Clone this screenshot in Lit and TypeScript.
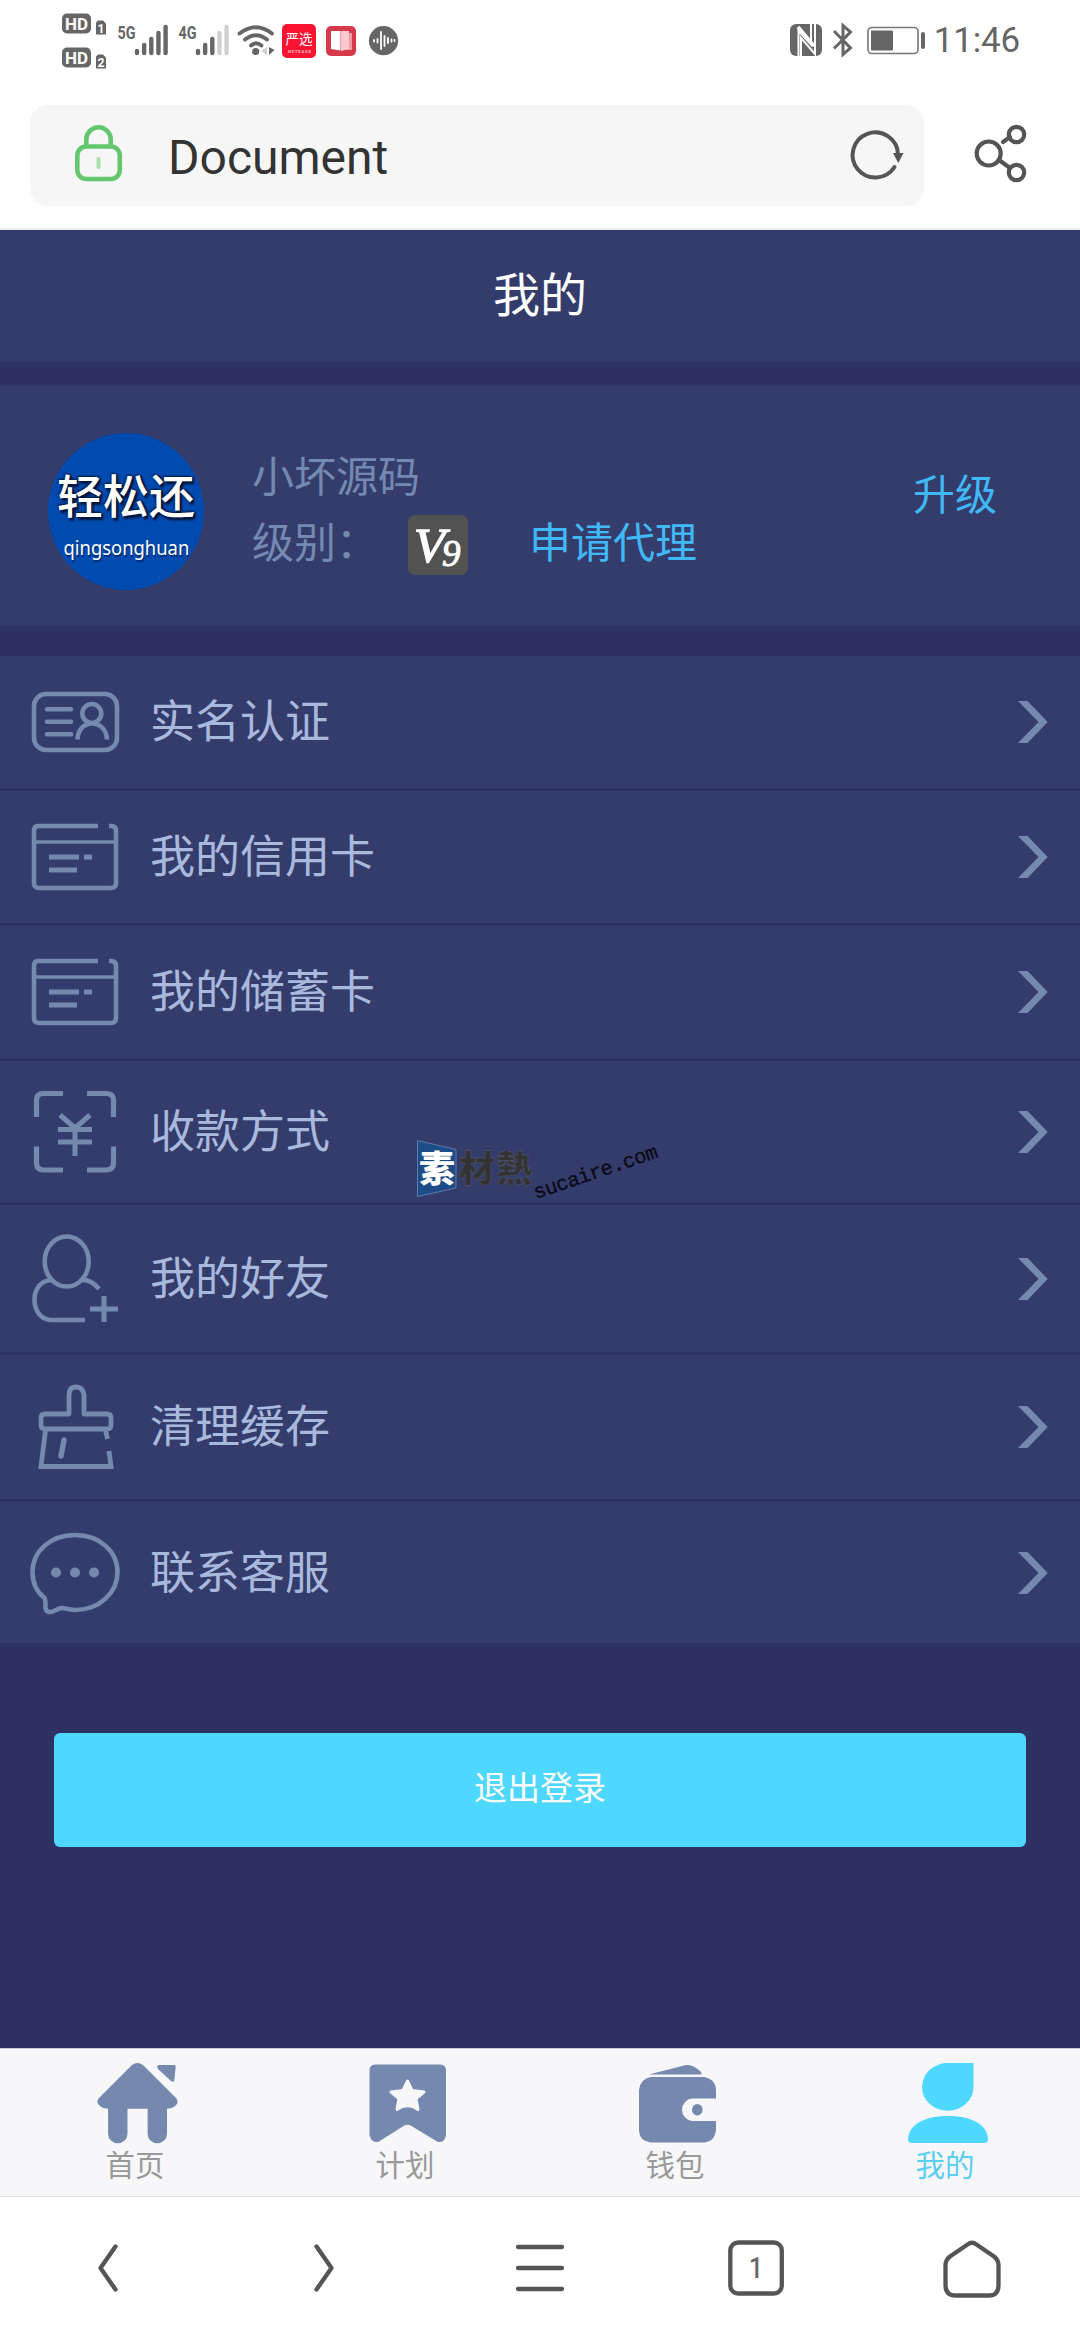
import { LitElement, html, svg, css, TemplateResult } from "lit";
import { customElement, property } from "lit/decorators.js";

const cardIcon = svg`<svg width="90" height="70" viewBox="30 822 90 70" fill="none" stroke="#7489ad" stroke-width="4.600">
  <path d="M98 826H38Q34 826 34 831V883Q34 888 39 888H111Q116 888 116 883V831Q116 826 111 826H109"/>
  <path d="M34 842H116" stroke-width="3.600"/><path d="M49 857H79M84 857H92M49 870H77" stroke-width="5"/></svg>`;

const idIcon = svg`<svg width="90" height="64" viewBox="30 690 90 64" fill="none" stroke="#7489ad" stroke-width="4.600">
  <rect x="34" y="694" width="83" height="56" rx="12"/>
  <path d="M47 709.300H71M47 721.800H71M47 734.300H71" stroke-linecap="round"/>
  <circle cx="91.800" cy="713.500" r="9.500"/>
  <path d="M77.500 739.500C78 729.500 84 723.500 92 723.500S106.500 729.500 107 739.500"/></svg>`;

const scanIcon = svg`<svg width="90" height="85" viewBox="30 1089 90 85" fill="none" stroke="#7489ad" stroke-width="5.200">
  <path d="M36.500 1117V1100Q36.500 1093.500 43.500 1093.500H63M87 1093.500H106Q113.500 1093.500 113.500 1100V1117M113.500 1146.500V1163Q113.500 1170 106 1170H87M63 1170H43.500Q36.500 1170 36.500 1163V1146.500"/>
  <path d="M60 1115L75 1128L90 1115M75 1128V1156M58 1129.500H92M58 1142H92" stroke-width="5"/></svg>`;

const friendIcon = svg`<svg width="90" height="91" viewBox="30 1233 90 91" fill="none" stroke="#7489ad" stroke-width="4.600">
  <ellipse cx="66.700" cy="1261.500" rx="22" ry="25"/>
  <path d="M52 1280C41 1280 34.500 1289 34.500 1299.500C34.500 1312 42 1320 52 1320H85M81 1280C89 1279 94 1283 99 1289"/><path d="M90 1309H118M104 1296V1322" stroke-width="5"/></svg>`;

const brushIcon = svg`<svg width="90" height="86" viewBox="30 1384 90 86" fill="none" stroke="#7489ad" stroke-width="4.800">
  <path d="M69 1414V1395Q69 1387 76 1387T84 1395V1414H107Q111 1414 111 1418V1425Q111 1429 107 1429H45Q41 1429 41 1425V1418Q41 1414 45 1414Z" stroke-linejoin="round"/>
  <path d="M45.500 1430L41 1466.500H111L109 1451M105.500 1430L107.500 1439"/><path d="M64 1440L61 1456" stroke-linecap="round" stroke-width="5.400"/></svg>`;

const chatIcon = svg`<svg width="90" height="84" viewBox="30 1530 90 84" fill="none" stroke="#7489ad" stroke-width="4.600">
  <path d="M44.500 1597C37 1591 32.500 1582 32.500 1571C32.500 1550 51 1534 75 1534S117.500 1550 117.500 1571S99 1609 75 1609C70 1609 66 1607 61 1607C56 1608 54 1611 50 1611C46 1611 45 1608 45.500 1603Q45.500 1599 44.500 1597Z"/>
  <g fill="#7489ad" stroke="none"><circle cx="56" cy="1571.500" r="5"/><circle cx="75" cy="1571.500" r="5"/><circle cx="94" cy="1571.500" r="5"/></g></svg>`;

const rows = [
  { label: "实名认证", icon: idIcon, size: "short" },
  { label: "我的信用卡", icon: cardIcon, size: "short" },
  { label: "我的储蓄卡", icon: cardIcon, size: "short" },
  { label: "收款方式", icon: scanIcon, size: "medium" },
  { label: "我的好友", icon: friendIcon, size: "tall" },
  { label: "清理缓存", icon: brushIcon, size: "roomy" },
  { label: "联系客服", icon: chatIcon, size: "medium" },
];

const tabs = [
  {
    label: "首页",
    icon: svg`<svg width="82" height="82" viewBox="95 2062 82 82" fill="currentColor"><path d="M131 2065Q136.500 2061 142 2065L175 2098Q178.500 2101.500 174.500 2105.500Q171 2108.700 166 2108.700V2134A9.700 9.200 0 0 1 146.600 2134V2108.700H126.500V2134A9.700 9.200 0 0 1 107.100 2134V2108.700Q102 2108.700 98.500 2105.500Q94.500 2101.500 98 2098Z"/><path d="M158 2065H173Q175 2065 174.700 2067L173.400 2080Q173 2083 170 2081L157 2069Q155 2065.500 158 2065Z"/></svg>`,
  },
  {
    label: "计划",
    icon: svg`<svg width="82" height="82" viewBox="365 2062 82 82" fill="currentColor"><path d="M374 2064.500H439Q445 2064.500 445 2070.500V2135Q443.500 2144 436 2141.500L410.500 2126Q406.500 2123.500 402.500 2126L378 2141.500Q370.500 2144 368.500 2135V2070.500Q368.500 2064.500 374 2064.500Z"/><path d="M406.500 2081L411 2090.500L423 2092L415 2098.500L417 2109.500Q406.500 2102 396 2109.500L398 2098.500L390 2092L402 2090.500Z" fill="#f7f7fa" stroke="#f7f7fa" stroke-width="3" stroke-linejoin="round"/></svg>`,
  },
  {
    label: "钱包",
    icon: svg`<svg width="82" height="82" viewBox="635 2062 82 82" fill="currentColor"><path d="M648 2074.500L685 2065Q692 2064 700 2072L700.500 2074.500Z"/><path d="M650 2077H703Q715 2079 715 2091V2098.500H691A11 11.300 0 0 0 691 2121H715V2130Q714 2141 704 2142.500H650Q639 2141.500 638 2131V2090Q639 2079 650 2077Z"/><ellipse cx="696.300" cy="2109.700" rx="5.300" ry="5.800"/></svg>`,
  },
  {
    label: "我的",
    icon: svg`<svg width="82" height="82" viewBox="905 2062 82 82" fill="currentColor"><path d="M943 2063H972.500V2087A25.700 23.800 0 0 1 921 2087Q922 2068 943 2063Z"/><path d="M907 2139C908 2123 926 2116 947 2116S986 2123 987 2139Q987 2143 983 2143H911Q907 2143 907 2139Z"/></svg>`,
  },
];

@customElement("status-bar")
class StatusBar extends LitElement {
  static styles = css`
    :host { display: flex; height: 80px; justify-content: space-between; }
    svg { display: block; }
    .clock { font: 35px/40px Roboto, sans-serif; color: #666; letter-spacing: -0.2px; padding-right: 60px; }
    .right { display: flex; padding-top: 21px; gap: 9px; }
    .condensed { font-family: Roboto, sans-serif; font-weight: 700; }
    .seal { font-family: "Noto Sans CJK SC", sans-serif; }
  `;
  hd(y: number, n: string) {
    return svg`<rect x="62" y=${y} width="29" height="20" rx="5" fill="#666"/>
      <text class="condensed" x="65" y=${y + 16} font-size="17" textLength="23" lengthAdjust="spacingAndGlyphs" fill="#fff">HD</text>
      <path d="M98 ${y + 7}h5l3 3v11h-10v-12z" fill="#666"/>
      <text class="condensed" x="97.500" y=${y + 19} font-size="13" textLength="7" lengthAdjust="spacingAndGlyphs" fill="#fff">${n}</text>`;
  }
  bars(x: number, full: number) {
    return [0, 1, 2, 3, 4].map(
      (i) => svg`<path d="M${x + i * 7.15} 53V${51 - i * 6}" stroke=${i < full ? "#666" : "#d0d0d0"} stroke-width="4.400" stroke-linecap="round"/>`
    );
  }
  render() {
    return html`
      <svg width="420" height="80" viewBox="0 0 420 80">
        ${this.hd(13.500, "1")}${this.hd(47.500, "2")}
        <g class="condensed" fill="#666" font-size="18.500"><text x="117.500" y="38.500" textLength="18" lengthAdjust="spacingAndGlyphs">5G</text><text x="178.500" y="38.500" textLength="18" lengthAdjust="spacingAndGlyphs">4G</text></g>
        ${this.bars(137, 5)}${this.bars(198, 3)}
        <g fill="none" stroke="#666" stroke-width="3.800" stroke-linecap="round"><path d="M239.500 33.500Q256 21 272 33.500M245 39.500Q256 31 267 39.500M251 45.500Q256 41 261.500 45.500"/></g>
        <circle cx="255.700" cy="51.500" r="3.600" fill="#666"/>
        <path d="M267 47V55L261 51Z" fill="#d0d0d0"/><path d="M269 47V55L274.500 50Z" fill="#666"/>
        <rect x="282" y="24" width="34" height="34" rx="5" fill="#fa1432"/>
        <text class="seal" x="285.500" y="44" font-size="13.500" fill="#fff">严选</text>
        <text class="condensed" x="288" y="52.500" font-size="4.200" letter-spacing=".8" fill="#fff" opacity=".7">NETEASE</text>
        <rect x="326" y="26" width="30" height="30" rx="5" fill="#d63a4a"/>
        <path d="M344 33h8v17h-8z" fill="#f09aa6"/><path d="M341 31h8v18l-8 2z" fill="#fac9d0"/><path d="M331 31h9.500v19.500L331 49z" fill="#fff"/>
        <circle cx="383.500" cy="40.700" r="14.600" fill="#666"/>
        <path d="M374 40v1.500M377.500 39v3.500M381 32v17M384.500 36v10M388 38v5M391.500 39.500v2M394.500 40v1" stroke="#fff" stroke-width="1.800" stroke-linecap="round"/>
      </svg>
      <div class="right">
        <svg width="137" height="40" viewBox="788 21 137 40">
          <rect x="790" y="24" width="32" height="32" rx="6" fill="#666"/>
          <path d="M798.500 57V31L811 44.500V24" fill="none" stroke="#fff" stroke-width="2"/>
          <path d="M801 57V38L815 54V24" fill="none" stroke="#fff" stroke-width="2"/>
          <path d="M798 27L814 46" stroke="#fff" stroke-width="3.500"/>
          <path d="M834 31L850.500 48L843 54.500V25.500L850.500 32L834 48.500" fill="none" stroke="#666" stroke-width="3"/>
          <rect x="868" y="27.500" width="50" height="26" rx="4" fill="none" stroke="#777" stroke-width="1.600"/>
          <rect x="871" y="30.500" width="22" height="20" rx="1" fill="#666"/>
          <rect x="921" y="32" width="4" height="17" rx="2" fill="#666"/>
        </svg>
        <span class="clock">11:46</span>
      </div>`;
  }
}

@customElement("address-bar")
class AddressBar extends LitElement {
  static styles = css`
    :host { display: flex; box-sizing: border-box; height: 150px; padding: 25px 0 22px 30px; border-bottom: 2px solid #eee; gap: 46px; }
    svg { display: block; }
    .field { box-sizing: border-box; display: flex; width: 894px; height: 101px; border-radius: 18px; background: #f6f6f6; padding: 18px 20px 0 43px; }
    .title { flex: 1; font: 48px/70px Roboto, sans-serif; color: #333; padding-left: 45px; }
    .share { padding-top: 18px; }
  `;
  render() {
    return html`
      <div class="field">
        <svg width="50" height="60" viewBox="73 123 50 60" fill="none" stroke="#64c76d" stroke-width="4.600">
          <path d="M86.300 147V139.500A12.200 12.200 0 0 1 110.700 139.500V147"/>
          <rect x="77.300" y="146.500" width="42.500" height="32.500" rx="9"/><path d="M98.500 159V167" stroke="#a5dfaa" stroke-width="4" stroke-linecap="round"/>
        </svg>
        <span class="title">Document</span>
        <svg width="56" height="60" viewBox="848 123 56 60">
          <path d="M898 154A22.700 22.500 0 1 0 894.500 167" fill="none" stroke="#555" stroke-width="4" stroke-linecap="round"/><path d="M893 153H903.500L898.300 163Z" fill="#555"/>
        </svg>
      </div>
      <svg class="share" width="60" height="64" viewBox="970 123 60 64" fill="none" stroke="#555" stroke-width="4.200">
        <circle cx="988.700" cy="153.500" r="12"/><circle cx="1016.500" cy="134.500" r="7.700"/><circle cx="1016.500" cy="172.500" r="7.700"/>
        <path d="M1003 142L1010 137M999 160L1010 168" stroke-linecap="round"/>
      </svg>`;
  }
}

@customElement("profile-card")
class ProfileCard extends LitElement {
  static styles = css`
    :host { display: flex; box-sizing: border-box; height: 240px; margin-top: 24px; padding: 47px 83px 0 48px; background: #343c6c; color: #7489b0; font-size: 42px; line-height: 60px; }
    .avatar { display: flex; flex-direction: column; align-items: center; width: 156px; height: 157px; border-radius: 50%; background: #004bb0; color: #fff; }
    .brand { margin-top: 30px; font-size: 46px; line-height: 60px; font-weight: 500; white-space: nowrap; text-shadow: 2px 3px 2px #00163f, -1px -1px 2px #00163f, 2px 0 2px #00163f; }
    .latin { margin-top: 12px; font: 20px/26px "Noto Sans", sans-serif; transform: scaleX(0.92); text-shadow: 1px 2px 1px #002a6e; }
    .info { flex: 1; padding-left: 48px; padding-top: 11px; }
    .level { display: flex; align-items: center; margin-top: 6px; height: 60px; }
    .caption { width: 156px; }
    .badge { width: 60px; height: 60px; margin-top: 10px; border-radius: 7px; background: #525252; }
    .glyph { font-family: "Liberation Serif", serif; font-style: italic; fill: #fff; stroke: #fff; }
    .apply { margin-left: 61px; color: #41b8f6; }
    .upgrade { color: #41b8f6; padding-top: 29px; }
  `;
  render() {
    return html`
      <div class="avatar"><span class="brand">轻松还</span><span class="latin">qingsonghuan</span></div>
      <div class="info">
        <div>小坏源码</div>
        <div class="level">
          <span class="caption">级别：</span>
          <svg class="badge" viewBox="0 0 60 60"><text class="glyph" x="6" y="47" font-size="49" stroke-width="1.400" textLength="31" lengthAdjust="spacingAndGlyphs">V</text><text class="glyph" x="34" y="51" font-size="37" stroke-width="1">9</text></svg>
          <span class="apply">申请代理</span>
        </div>
      </div>
      <span class="upgrade">升级</span>`;
  }
}

@customElement("menu-row")
class MenuRow extends LitElement {
  @property() label = "";
  @property({ attribute: false }) icon?: TemplateResult | unknown;
  static styles = css`
    :host { display: flex; align-items: center; box-sizing: border-box; padding: 0 32px 0 30px; background: #343c6c; border-bottom: 3px solid #2d3262; color: #a9b9dd; }
    svg { display: block; }
    .label { flex: 1; padding-left: 30px; font-size: 45px; line-height: 60px; margin-top: -6px; }
  `;
  render() {
    return html`${this.icon}<span class="label">${this.label}</span>
      <svg width="30" height="42" viewBox="1018 701 30 42"><path d="M1018 701H1027.500L1047.700 722L1027.500 743H1018L1038.500 722Z" fill="#7489ad"/></svg>`;
  }
}

@customElement("tab-bar")
class TabBar extends LitElement {
  static styles = css`
    :host { display: grid; grid-template-columns: repeat(4, 1fr); box-sizing: border-box; height: 149px; background: #f7f7fa; border-top: 1px solid #c9cad8; border-bottom: 1px solid #ddd; }
    .tab { display: flex; flex-direction: column; align-items: center; padding-top: 13px; color: #7489ad; }
    .tab:last-child { color: #4fd8ff; }
    svg { display: block; margin-left: 3px; }
    .name { font-size: 29.500px; line-height: 40px; margin-top: -1px; color: #999; }
    .tab:last-child .name { color: #5acdf2; }
  `;
  render() {
    return html`${tabs.map((t) => html`<div class="tab">${t.icon}<span class="name">${t.label}</span></div>`)}`;
  }
}

@customElement("browser-nav")
class BrowserNav extends LitElement {
  static styles = css`
    :host { display: grid; grid-template-columns: repeat(5, 1fr); box-sizing: border-box; height: 143px; padding-bottom: 2px; background: #fff; place-items: center; }
    svg { display: block; fill: none; stroke: #555; stroke-width: 4.300; stroke-linecap: round; stroke-linejoin: round; }
    .count { font: 500 30px Roboto, sans-serif; fill: #666; stroke: none; }
  `;
  render() {
    return html`
      <svg width="64" height="64"><path d="M39.500 10.500L24.500 32L39.500 53.500"/></svg>
      <svg width="64" height="64"><path d="M24.500 10.500L39.500 32L24.500 53.500"/></svg>
      <svg width="64" height="64"><path d="M10 11H54M10 32H54M10 53H54"/></svg>
      <svg width="64" height="64"><rect x="6.300" y="6.500" width="51.500" height="51" rx="8"/><text class="count" x="25" y="42" textLength="14" lengthAdjust="spacingAndGlyphs">1</text></svg>
      <svg width="64" height="64"><path d="M27.500 8.500Q32 5 36.500 8.500L54 20.500Q58.500 24 58.500 29V49Q58.500 59.500 49 59.500H15.500Q5.500 59.500 5.500 49V29Q5.500 24 10 20.500Z"/></svg>`;
  }
}

@customElement("app-root")
class AppRoot extends LitElement {
  static styles = css`
    :host { display: flex; flex-direction: column; position: relative; width: 1080px; height: 2340px; overflow: hidden; background: #fff; font-family: "Noto Sans CJK SC", sans-serif; }
    .page { flex: 1; background: #2d3262; }
    .heading { height: 132px; background: #343c6c; color: #fff; font-size: 47px; line-height: 123px; text-align: center; }
    .menu { margin-top: 30px; }
    .short { height: 135px; }
    .medium { height: 144px; }
    .tall { height: 150px; }
    .roomy { height: 147px; }
    .logout { margin: 87px 54px 0; height: 114px; border-radius: 6px; background: #4fd8ff; color: #fff; font-size: 33px; line-height: 106px; text-align: center; }
    .watermark { position: absolute; left: 410px; top: 1130px; }
    .mark { font-family: "Noto Sans CJK SC", sans-serif; font-weight: 900; }
    .site { font-family: "Liberation Mono", monospace; }
  `;
  render() {
    return html`
      <status-bar></status-bar>
      <address-bar></address-bar>
      <div class="page">
        <div class="heading">我的</div>
        <profile-card></profile-card>
        <div class="menu">
          ${rows.map((r) => html`<menu-row class=${r.size} .label=${r.label} .icon=${r.icon}></menu-row>`)}
        </div>
        <div class="logout">退出登录</div>
      </div>
      <tab-bar></tab-bar>
      <browser-nav></browser-nav>
      <svg class="watermark" width="270" height="80" viewBox="410 1130 270 80">
        <path d="M417.500 1140.500L456 1149.500V1188L417.500 1196.500Z" fill="#1d4c86" stroke="#6f88b5" stroke-width=".8"/>
        <text class="mark" x="419" y="1182" font-size="36" fill="#fff">素</text>
        <text class="mark" x="459" y="1182" font-size="36" letter-spacing="1.500" fill="#333" stroke="#5d6070" stroke-width=".4">材熱</text>
        <text class="site" transform="translate(536 1199) rotate(-18.800)" font-size="20.500" textLength="130" fill="#0a0a14" stroke="#0a0a14" stroke-width=".3">sucaire.com</text>
      </svg>`;
  }
}
